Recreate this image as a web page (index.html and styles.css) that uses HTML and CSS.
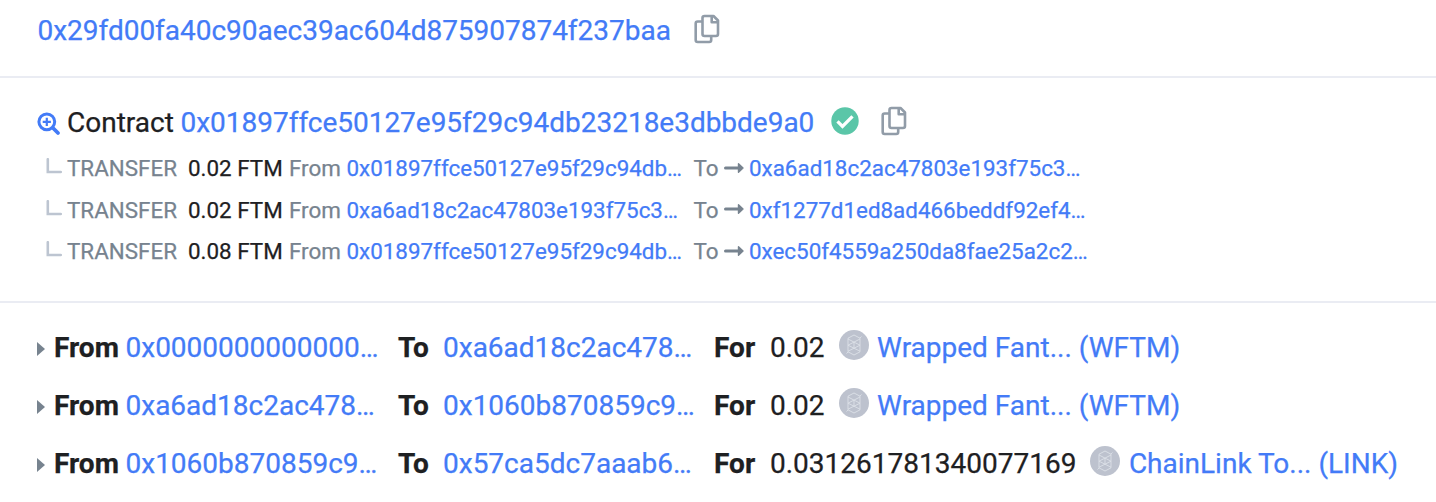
FILE: index.html
```html
<!DOCTYPE html>
<html lang="en"><head><meta charset="utf-8"><title>Transaction</title><link rel="stylesheet" href="styles.css"></head>
<body>
<svg class="defs" aria-hidden="true">
<symbol id="copy" viewBox="0 0 26 30"><path d="M10.500 2h9l4.500 4.500V20a2 2 0 0 1-2 2H10.500a2 2 0 0 1-2-2V4a2 2 0 0 1 2-2zM17.700 2v6.200H24M8.500 7.500H3.700a2 2 0 0 0-2 2V26a2 2 0 0 0 2 2h11.500a2 2 0 0 0 2-2v-4" fill="none" stroke="#919ca8" stroke-width="2.600" stroke-linejoin="round"/></symbol>
<symbol id="arrow" viewBox="0 0 20 12"><path d="M1.500 6h13" stroke="#77838f" stroke-width="3" stroke-linecap="round"/><path d="M14.500 1.800L19 6l-4.500 4.200z" fill="#77838f" stroke="#77838f" stroke-width="1.400" stroke-linejoin="round"/></symbol>
<symbol id="branch" viewBox="0 0 16 16"><path d="M1.800 1.200v12.800H14.800" fill="none" stroke="#bdc5d1" stroke-width="2.600" stroke-linecap="round"/></symbol>
<symbol id="token" viewBox="0 0 30 30"><circle cx="15" cy="15" r="15" fill="#bdc2ce"/><path d="M15 5l6 3.200v13.600L15 25l-6-3.200V8.200zM9 9l12 6.200-12 6M21 9L9 15.200l12 6M15 12v6.500M7.500 23.500l1.500-1.500M21 8l1.500-1.500" fill="none" stroke="#dde1e8" stroke-width=".9"/></symbol>
</svg>
<main>
<section class="to"><a class="address">0x29fd00fa40c90aec39ac604d875907874f237baa</a><svg class="copy"><use href="#copy"/></svg></section>
<section class="contract">
<div class="heading"><svg class="search" viewBox="0 0 24 24"><circle cx="9.800" cy="9.800" r="7.900" fill="none" stroke="#437bf7" stroke-width="3"/><path d="M5.700 9.800h8.200M9.800 5.700v8.200" stroke="#437bf7" stroke-width="2.200"/><path d="M16 16l5 5" stroke="#437bf7" stroke-width="3.800" stroke-linecap="round"/></svg><span class="label">Contract</span><a class="address">0x01897ffce50127e95f29c94db23218e3dbbde9a0</a><svg class="check" viewBox="0 0 28 28"><circle cx="14" cy="14" r="13.700" fill="#5ac6a8"/><path d="M6.500 14.300l5 5L21.500 9.300" fill="none" stroke="white" stroke-width="3.300"/></svg><svg class="copy"><use href="#copy"/></svg></div>
<div class="transfer"><svg class="branch"><use href="#branch"/></svg><span class="kind">TRANSFER</span><span class="value">0.02 FTM</span><span class="from">From</span><a class="source">0x01897ffce50127e95f29c94db…</a><span class="dest">To</span><svg class="arrow"><use href="#arrow"/></svg><a>0xa6ad18c2ac47803e193f75c3…</a></div>
<div class="transfer"><svg class="branch"><use href="#branch"/></svg><span class="kind">TRANSFER</span><span class="value">0.02 FTM</span><span class="from">From</span><a class="source">0xa6ad18c2ac47803e193f75c3…</a><span class="dest">To</span><svg class="arrow"><use href="#arrow"/></svg><a>0xf1277d1ed8ad466beddf92ef4…</a></div>
<div class="transfer"><svg class="branch"><use href="#branch"/></svg><span class="kind">TRANSFER</span><span class="value">0.08 FTM</span><span class="from">From</span><a class="source">0x01897ffce50127e95f29c94db…</a><span class="dest">To</span><svg class="arrow"><use href="#arrow"/></svg><a>0xec50f4559a250da8fae25a2c2…</a></div>
</section>
<section class="tokens">
<div class="token-row"><i class="caret"></i><b class="tfrom">From</b><a class="tsource">0x0000000000000…</a><b class="tto">To</b><a class="tdest">0xa6ad18c2ac478…</a><b class="tfor">For</b><span>0.02</span><svg class="token"><use href="#token"/></svg><a>Wrapped Fant... (WFTM)</a></div>
<div class="token-row"><i class="caret"></i><b class="tfrom">From</b><a class="tsource">0xa6ad18c2ac478…</a><b class="tto">To</b><a class="tdest">0x1060b870859c9…</a><b class="tfor">For</b><span>0.02</span><svg class="token"><use href="#token"/></svg><a>Wrapped Fant... (WFTM)</a></div>
<div class="token-row"><i class="caret"></i><b class="tfrom">From</b><a class="tsource">0x1060b870859c9…</a><b class="tto">To</b><a class="tdest">0x57ca5dc7aaab6…</a><b class="tfor">For</b><span>0.031261781340077169</span><svg class="token"><use href="#token"/></svg><a>ChainLink To... (LINK)</a></div>
</section>
</main></body></html>
```
FILE: styles.css
```css
*{box-sizing:border-box}
body{margin:0;background:#fff;color:#1e2022;font:28px/42px Roboto,sans-serif;-webkit-text-stroke:.25px;white-space:nowrap;overflow:hidden}
.defs{display:none}
a{color:#437bf7}
svg,i{flex:none}
.to{height:78px;padding:10px 37.500px;border-bottom:2px solid #eaecf3;display:flex}
.copy{width:26px;height:30px;margin:4px 0 0 22px}
.address{width:634px;letter-spacing:-.02px}
.contract{height:225px;padding:24px 37px 0;border-bottom:2px solid #eaecf3}
.heading{display:flex;height:45px}
.search{width:24px;height:24px;margin:10px 6px 0 0}
.label{width:113.500px}
.check{width:28px;height:28px;margin:5px 0 0 16.500px}
.transfer{display:flex;font-size:22.400px;line-height:42px;height:41.500px;padding-left:8.500px;color:#77838f}
.branch{width:16px;height:16px;margin:11px 5.500px 0 0}
.kind{width:121px}
.value{width:101px;color:#1e2022}
.from{width:57.500px}
.source{width:347px}
.dest{width:30px}
.arrow{width:20px;height:12px;margin:14.500px 5.500px 0 0}
.tokens{padding:24px 37px}
.token-row{display:flex;height:58px;line-height:42px}
.caret{width:8px;height:14px;background:#77838f;clip-path:polygon(0 0,100% 50%,0 100%);margin:15px 9px 0 0}
b{font-weight:700}
.tfrom{width:71.500px}
.tsource{width:272.500px}
.tto{width:45px}
.tdest{width:271px}
.tfor{width:56px}
.token{width:30px;height:30px;margin:3px 8.500px 0 14px}
```
